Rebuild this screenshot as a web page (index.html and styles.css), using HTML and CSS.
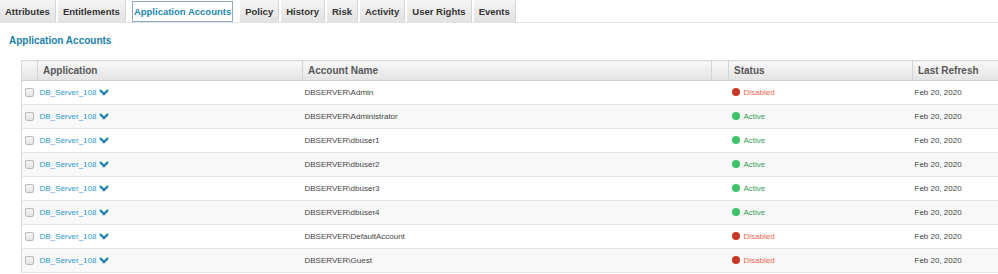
FILE: index.html
```html
<!DOCTYPE html>
<html lang="en">
<head>
    <meta charset="UTF-8">
    <title>Application Accounts</title>
    <link rel="stylesheet" href="styles.css">
</head>
<body>
    <div class="tabs">
        <a class="tab">Attributes</a>
        <a class="tab">Entitlements</a>
        <a class="tab active">Application Accounts</a>
        <a class="tab">Policy</a>
        <a class="tab">History</a>
        <a class="tab">Risk</a>
        <a class="tab">Activity</a>
        <a class="tab">User Rights</a>
        <a class="tab">Events</a>
    </div>

    <h2 class="section-title">Application Accounts</h2>

    <div class="table-wrap">
        <table class="accounts">
            <colgroup>
                <col class="c-check">
                <col class="c-app">
                <col class="c-name">
                <col class="c-blank">
                <col class="c-status">
                <col class="c-refresh">
            </colgroup>
            <thead>
                <tr>
                    <th></th>
                    <th>Application</th>
                    <th>Account Name</th>
                    <th></th>
                    <th>Status</th>
                    <th>Last Refresh</th>
                </tr>
            </thead>
            <tbody>
                <tr>
                    <td class="check"><span class="box"></span></td>
                    <td><a class="app">DB_Server_108</a><svg class="chev" viewBox="0 0 10 7"><polyline points="1,1 5,5 9,1"/></svg></td>
                    <td>DBSERVER\Admin</td>
                    <td></td>
                    <td><span class="status off"><span class="dot"></span>Disabled</span></td>
                    <td>Feb 20, 2020</td>
                </tr>
                <tr>
                    <td class="check"><span class="box"></span></td>
                    <td><a class="app">DB_Server_108</a><svg class="chev" viewBox="0 0 10 7"><polyline points="1,1 5,5 9,1"/></svg></td>
                    <td>DBSERVER\Administrator</td>
                    <td></td>
                    <td><span class="status on"><span class="dot"></span>Active</span></td>
                    <td>Feb 20, 2020</td>
                </tr>
                <tr>
                    <td class="check"><span class="box"></span></td>
                    <td><a class="app">DB_Server_108</a><svg class="chev" viewBox="0 0 10 7"><polyline points="1,1 5,5 9,1"/></svg></td>
                    <td>DBSERVER\dbuser1</td>
                    <td></td>
                    <td><span class="status on"><span class="dot"></span>Active</span></td>
                    <td>Feb 20, 2020</td>
                </tr>
                <tr>
                    <td class="check"><span class="box"></span></td>
                    <td><a class="app">DB_Server_108</a><svg class="chev" viewBox="0 0 10 7"><polyline points="1,1 5,5 9,1"/></svg></td>
                    <td>DBSERVER\dbuser2</td>
                    <td></td>
                    <td><span class="status on"><span class="dot"></span>Active</span></td>
                    <td>Feb 20, 2020</td>
                </tr>
                <tr>
                    <td class="check"><span class="box"></span></td>
                    <td><a class="app">DB_Server_108</a><svg class="chev" viewBox="0 0 10 7"><polyline points="1,1 5,5 9,1"/></svg></td>
                    <td>DBSERVER\dbuser3</td>
                    <td></td>
                    <td><span class="status on"><span class="dot"></span>Active</span></td>
                    <td>Feb 20, 2020</td>
                </tr>
                <tr>
                    <td class="check"><span class="box"></span></td>
                    <td><a class="app">DB_Server_108</a><svg class="chev" viewBox="0 0 10 7"><polyline points="1,1 5,5 9,1"/></svg></td>
                    <td>DBSERVER\dbuser4</td>
                    <td></td>
                    <td><span class="status on"><span class="dot"></span>Active</span></td>
                    <td>Feb 20, 2020</td>
                </tr>
                <tr>
                    <td class="check"><span class="box"></span></td>
                    <td><a class="app">DB_Server_108</a><svg class="chev" viewBox="0 0 10 7"><polyline points="1,1 5,5 9,1"/></svg></td>
                    <td>DBSERVER\DefaultAccount</td>
                    <td></td>
                    <td><span class="status off"><span class="dot"></span>Disabled</span></td>
                    <td>Feb 20, 2020</td>
                </tr>
                <tr>
                    <td class="check"><span class="box"></span></td>
                    <td><a class="app">DB_Server_108</a><svg class="chev" viewBox="0 0 10 7"><polyline points="1,1 5,5 9,1"/></svg></td>
                    <td>DBSERVER\Guest</td>
                    <td></td>
                    <td><span class="status off"><span class="dot"></span>Disabled</span></td>
                    <td>Feb 20, 2020</td>
                </tr>
            </tbody>
        </table>
    </div>
</body>
</html>
```

FILE: styles.css
```css
* {
    margin: 0;
    padding: 0;
    box-sizing: border-box;
}

body {
    font-family: 'Liberation Sans', Arial, sans-serif;
    background: #fff;
    color: #333;
    overflow: hidden;
}

/* tab strip */
.tabs {
    display: flex;
    gap: 2px;
    height: 23px;
    border-bottom: 1px solid #e4e4e4;
}

.tab {
    display: flex;
    align-items: center;
    height: 22px;
    padding: 0 5px;
    font-size: 9.5px;
    font-weight: bold;
    color: #333;
    background: linear-gradient(#f4f4f4, #e2e2e2);
    border-right: 1px solid #d6d6d6;
}

.tab.active {
    margin: 1px 5px 0 4px;
    height: 21px;
    padding: 0 1px;
    background: #fff;
    color: #1d87b0;
    border: 1px solid #8fa9c7;
}

.section-title {
    font-size: 10px;
    font-weight: bold;
    color: #1a7fa8;
    line-height: 14px;
    padding: 11px 0 0 9px;
}

/* accounts table */
.table-wrap {
    margin: 12px 0 0 21px;
}

.accounts {
    width: 1010px;
    table-layout: fixed;
    border-collapse: collapse;
    border-left: 1px solid #dcdcdc;
}

.c-check { width: 16px; }
.c-app { width: 265px; }
.c-name { width: 409px; }
.c-blank { width: 17px; }
.c-status { width: 184px; }
.c-refresh { width: 119px; }

.accounts th {
    height: 20px;
    padding: 0 0 0 5px;
    text-align: left;
    font-size: 10px;
    font-weight: bold;
    color: #585858;
    background: linear-gradient(#f8f8f8, #e3e3e3);
    border-top: 1px solid #dadada;
    border-bottom: 1px solid #d0d0d0;
    border-right: 1px solid #d3d3d3;
}

.accounts td {
    height: 24px;
    padding: 0 0 0 2px;
    font-size: 8px;
    color: #444;
    white-space: nowrap;
    border-bottom: 1px solid #e6e6e6;
}

.accounts tbody tr:nth-child(even) td {
    background: #f8f8f8;
}

.accounts td.check {
    padding: 0;
    text-align: center;
}

.box {
    display: inline-block;
    width: 9px;
    height: 9px;
    vertical-align: middle;
    border: 1px solid #b9b9b9;
    border-radius: 2px;
    background: linear-gradient(#f6f6f6, #e4e4e4);
}

.app {
    color: #2a9ad2;
    vertical-align: middle;
}

.chev {
    width: 10px;
    height: 7px;
    margin-left: 3px;
    vertical-align: middle;
    fill: none;
    stroke: #1b84b0;
    stroke-width: 2.4;
}

.status {
    display: inline-flex;
    align-items: center;
    vertical-align: middle;
}

.dot {
    width: 8px;
    height: 8px;
    margin: -2px 4px 0 1px;
    border-radius: 50%;
}

.status.off { color: #f2654f; }
.status.off .dot { background: #c93526; }
.status.on { color: #3a9b5c; }
.status.on .dot { background: #3cc46c; }
```
